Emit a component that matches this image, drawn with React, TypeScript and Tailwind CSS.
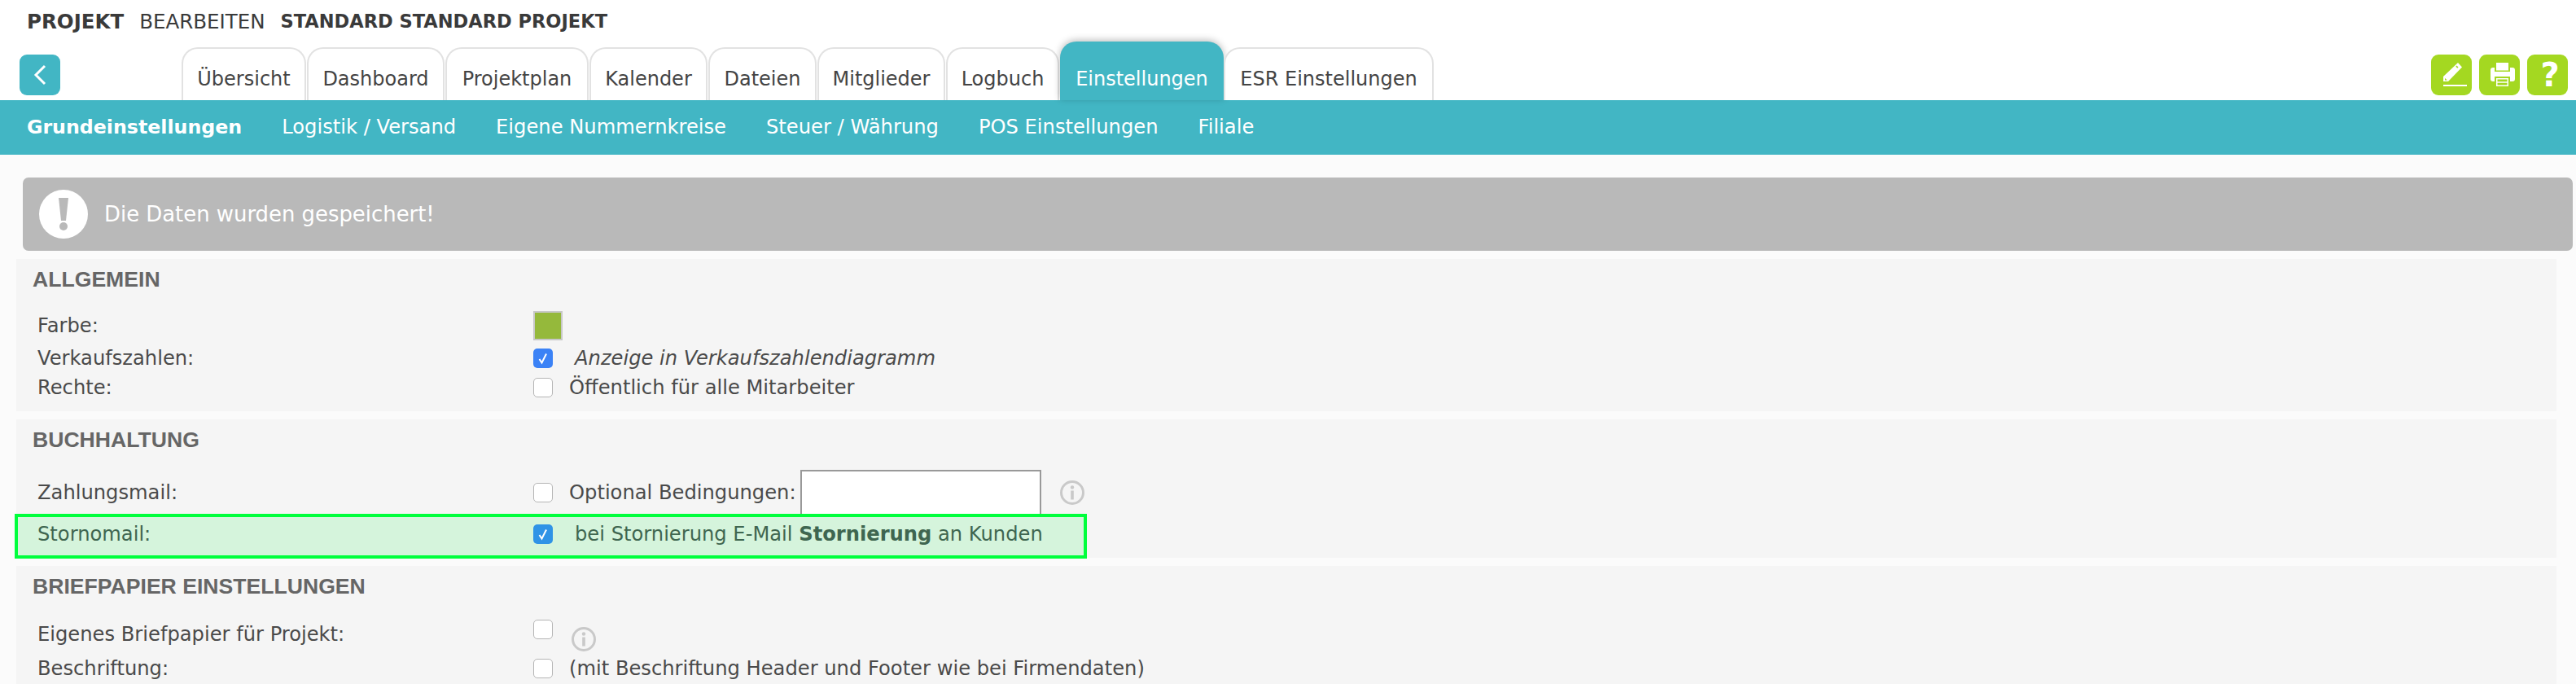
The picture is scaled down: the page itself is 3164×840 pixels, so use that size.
import type { ReactNode } from "react";

const TABS = [
  { label: "Übersicht", width: "w-[153px]" },
  { label: "Dashboard", width: "w-[169px]" },
  { label: "Projektplan", width: "w-[176px]" },
  { label: "Kalender", width: "w-[145px]" },
  { label: "Dateien", width: "w-[133px]" },
  { label: "Mitglieder", width: "w-[157px]" },
  { label: "Logbuch", width: "w-[139px]" },
];

const SUB_NAV = ["Logistik / Versand", "Eigene Nummernkreise", "Steuer / Währung", "POS Einstellungen", "Filiale"];

function Checkbox({ checked = false, tone = "bg-[#3b82f6]" }: { checked?: boolean; tone?: string }) {
  if (!checked) {
    return <span className="block h-6 w-6 shrink-0 rounded-[5px] border border-[#b5b5b5] bg-white" />;
  }
  return (
    <span className={`grid h-6 w-6 shrink-0 place-items-center rounded-[5px] ${tone}`}>
      <svg viewBox="0 0 24 24" className="h-6 w-6" fill="none" stroke="white" strokeWidth="2">
        <path d="M7.5 13l3 4.5 5.5-11" />
      </svg>
    </span>
  );
}

function InfoIcon() {
  return (
    <svg viewBox="0 0 30 30" className="h-[30px] w-[30px] shrink-0" fill="none">
      <circle cx="15" cy="15" r="13.5" stroke="#c9c9c9" strokeWidth="3" />
      <circle cx="15" cy="8.5" r="2.2" fill="#c9c9c9" />
      <path d="M15 12.5v11" stroke="#c9c9c9" strokeWidth="3.6" />
    </svg>
  );
}

function Row({ label, height, children }: { label: string; height: string; children: ReactNode }) {
  return (
    <div className={`flex items-center pl-[26px] ${height}`}>
      <div className="w-[609px] shrink-0">{label}</div>
      <div className="flex items-center">{children}</div>
    </div>
  );
}

function SectionTitle({ children }: { children: ReactNode }) {
  return <h2 className="pl-[20px] font-['Liberation_Sans',Arial,sans-serif] text-[26.6px] leading-[50px] font-bold text-[#666]">{children}</h2>;
}

function ActionButton({ children }: { children: ReactNode }) {
  return <div className="grid h-[50px] w-[50px] place-items-center rounded-[9px] bg-[#a4d821] text-white">{children}</div>;
}

export default function App() {
  return (
    <div className="h-[840px] w-[3164px] overflow-hidden bg-white font-['DejaVu_Sans',Verdana,sans-serif] text-[24.2px] text-[#4a4a4a]">
      <div className="flex h-[54px] items-center gap-[19px] pl-[33px] text-[24.5px] text-[#3a3a3a]">
        <span className="font-bold">PROJEKT</span>
        <span>BEARBEITEN</span>
        <span className="text-[22.5px] font-bold">STANDARD STANDARD PROJEKT</span>
      </div>

      <div className="flex h-[69px] items-end pl-[24px] pr-[10px]">
        <div className="mb-[6px] grid h-[50px] w-[50px] place-items-center rounded-[9px] bg-[#42b6c4]">
          <svg viewBox="0 0 50 50" className="h-[50px] w-[50px]" fill="none" stroke="white" strokeWidth="3">
            <path d="M31 14L20 25l11 11" />
          </svg>
        </div>
        <div className="ml-[149px] flex items-end text-[24px]">
          {TABS.map((tab) => (
            <div
              key={tab.label}
              className={`${tab.width} mr-px h-[65px] rounded-t-[20px] border-x-2 border-t-2 border-[#e2e2e2] bg-white pt-[19px] text-center text-[#444]`}
            >
              {tab.label}
            </div>
          ))}
          <div className="h-[72px] w-[201px] rounded-t-[20px] bg-[#42b6c4] pt-[28px] text-center text-white shadow-[0_-2px_8px_rgba(0,0,0,0.25)]">
            Einstellungen
          </div>
          <div className="h-[65px] w-[258px] rounded-t-[20px] border-x-2 border-t-2 border-[#e2e2e2] bg-white pt-[19px] text-center text-[#444]">
            ESR Einstellungen
          </div>
        </div>
        <div className="mb-[6px] ml-auto flex gap-[9px]">
          <ActionButton>
            <svg viewBox="0 0 50 50" className="h-[50px] w-[50px]" fill="white">
              <path d="M33 10l5 5.5L21 33h-6v-6z" />
              <path d="M31.5 13.5l2 2-1.2 1.2-2-2z" fill="#a4d821" />
              <path d="M17 29v2.5h3z" fill="#a4d821" />
              <rect x="15" y="37" width="29" height="2" />
            </svg>
          </ActionButton>
          <ActionButton>
            <svg viewBox="0 0 50 50" className="h-[50px] w-[50px]" fill="white">
              <rect x="21" y="10" width="15" height="9.5" />
              <path d="M17 16h2v5h19v-5h3a3 3 0 0 1 3 3v11a3 3 0 0 1-3 3h-3v-6H19v6h-2a3 3 0 0 1-3-3V19a3 3 0 0 1 3-3z" />
              <path d="M21 29h15v10H21z" />
              <path d="M22.5 30.5h12v2.8h-12zM22.5 34.8h12v2.8h-12z" fill="#a4d821" />
            </svg>
          </ActionButton>
          <ActionButton>
            <span className="pl-[6px] text-[40px] leading-none font-bold">?</span>
          </ActionButton>
        </div>
      </div>

      <nav className="flex h-[67px] items-center gap-[49px] bg-[#42b6c4] pl-[33px] text-[24.2px] text-white">
        <span className="text-[23.7px] font-bold">Grundeinstellungen</span>
        {SUB_NAV.map((item) => (
          <span key={item}>{item}</span>
        ))}
      </nav>

      <main className="bg-[#fbfbfb] pt-[28px] pr-[24px] pl-[20px]">
        <div className="ml-[8px] mr-[-20px] flex h-[90px] items-center gap-[20px] rounded-[7px] bg-[#b9b9b9] pl-[20px] text-white">
          <div className="relative h-[60px] w-[60px] rounded-full bg-white">
            <svg viewBox="0 0 60 60" className="h-[60px] w-[60px]" fill="#b9b9b9">
              <path d="M24 10h12l-3 28h-6z" />
              <circle cx="30" cy="45" r="5" />
            </svg>
          </div>
          <span className="text-[25.9px]">Die Daten wurden gespeichert!</span>
        </div>

        <section className="mt-[10px] h-[187px] bg-[#f5f5f5]">
          <SectionTitle>ALLGEMEIN</SectionTitle>
          <div className="pt-[14px]">
            <Row label="Farbe:" height="h-[36px]">
              <span className="block h-9 w-9 border-2 border-[#c8c8c8] bg-[#95b93b]" />
            </Row>
            <Row label="Verkaufszahlen:" height="h-[45px]">
              <Checkbox checked />
              <em className="ml-[27px]">Anzeige in Verkaufszahlendiagramm</em>
            </Row>
            <Row label="Rechte:" height="h-[26px]">
              <Checkbox />
              <span className="ml-[20px]">Öffentlich für alle Mitarbeiter</span>
            </Row>
          </div>
        </section>

        <section className="mt-[10px] h-[170px] bg-[#f5f5f5]">
          <SectionTitle>BUCHHALTUNG</SectionTitle>
          <div className="pt-[14px]">
            <Row label="Zahlungsmail:" height="h-[52px]">
              <Checkbox />
              <span className="ml-[20px]">Optional Bedingungen:</span>
              <input className="ml-[5px] h-[56px] w-[296px] border-2 border-[#999] bg-white" readOnly />
              <span className="ml-[23px]">
                <InfoIcon />
              </span>
            </Row>
            <div className="relative z-10 ml-[-2px] flex h-[55px] w-[1317px] items-center border-4 border-[#00ff3c] bg-[#d5f4dc] pb-[5px] pl-[24px] text-[#3f6650]">
              <div className="w-[609px] shrink-0">Stornomail:</div>
              <Checkbox checked tone="bg-[#2f93e6]" />
              <span className="ml-[27px]">
                bei Stornierung E-Mail <b>Stornierung</b> an Kunden
              </span>
            </div>
          </div>
        </section>

        <section className="mt-[10px] h-[145px] bg-[#f5f5f5]">
          <SectionTitle>BRIEFPAPIER EINSTELLUNGEN</SectionTitle>
          <div className="pt-[10px]">
            <Row label="Eigenes Briefpapier für Projekt:" height="h-[48px]">
              <span className="mt-[-12px]">
                <Checkbox />
              </span>
              <span className="ml-[23px] mt-[12px]">
                <InfoIcon />
              </span>
            </Row>
            <Row label="Beschriftung:" height="h-[36px]">
              <Checkbox />
              <span className="ml-[20px]">(mit Beschriftung Header und Footer wie bei Firmendaten)</span>
            </Row>
          </div>
        </section>
      </main>
    </div>
  );
}
